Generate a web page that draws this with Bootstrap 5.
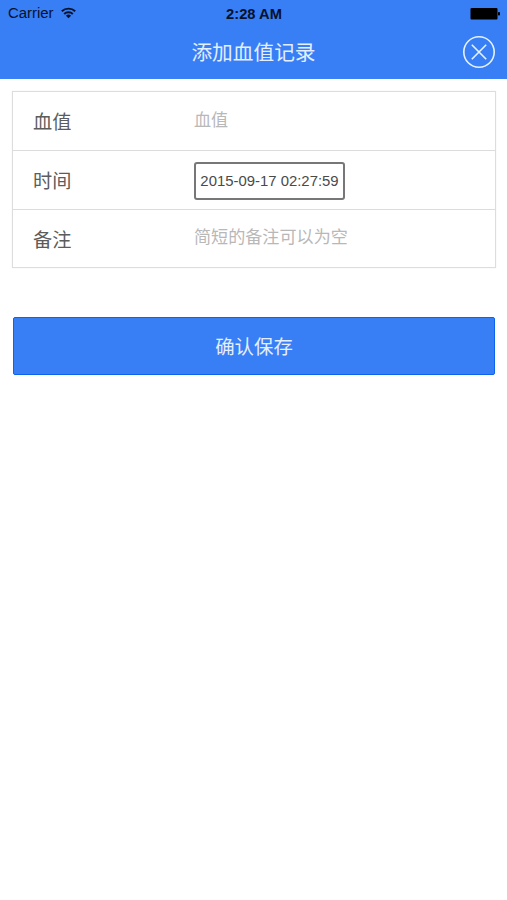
<!DOCTYPE html>
<html lang="zh-CN">
<head>
<meta charset="utf-8">
<meta name="viewport" content="width=device-width, initial-scale=1">
<title>添加血值记录</title>
<link href="https://cdn.jsdelivr.net/npm/bootstrap@5.3.0/dist/css/bootstrap.min.css" rel="stylesheet">
<style>
  body { font-family: "Liberation Sans", "Noto Sans CJK SC", sans-serif; background: #fff; color: #555; }
  .cjk { font-family: "Noto Sans CJK SC", sans-serif; font-weight: 400; }
  .app-header { background: #387ef5; height: 79px; }
  .status-bar { height: 27px; padding: 0 7px 0 8px; font-size: 14.9px; line-height: 27px; color: #06122c; }
  .status-side { flex: 1 1 0; }
  .clock { font-weight: 700; font-size: 14.7px; padding-top: 1px; }
  .wifi { margin: -1px 0 0 7px; }
  .title-bar { height: 52px; padding: 0 12px; }
  .page-title { font-size: 20.7px; line-height: 50px; padding-bottom: 5px; color: #e3eefe; }
  .close-btn { width: 32px; height: 32px; margin-top: -3px; }
  .page-body { padding: 12px 11px 0 12px; }
  .form-list { border: 1px solid #ddd; box-shadow: 0 0 1px #e4e4e4; }
  .form-item { height: 59px; padding-left: 20px; border-bottom: 1px solid #dcdcdc; }
  .form-item:last-child { height: 57px; border-bottom: 0; }
  .item-label { width: 161px; font-size: 19.2px; color: #5c5c5c; padding-top: 1px; }
  .item-input { font-size: 17.1px; color: #444; height: 34px; margin-top: -5px; }
  .form-item:last-child .item-input { margin-top: -7px; }
  .item-input::placeholder { color: #b8b8b8; opacity: 1; }
  .time-box { width: 151px; height: 38px; margin-top: 1px; border: 2px solid #777; border-radius: 3px; font-size: 14.9px; color: #4a4a4a; padding-top: 1px; }
  .save-btn { --bs-btn-bg: #387ef5; --bs-btn-color: #e3eefe; --bs-btn-border-color: #0c63ee; --bs-btn-border-radius: 2px; height: 58px; margin: 49px 1px 0; font-size: 19.4px; }
</style>
</head>
<body>
<header class="app-header">
  <div class="status-bar d-flex align-items-center">
    <div class="status-side d-flex align-items-center">
      <span>Carrier</span>
      <svg class="wifi" width="15" height="12" viewBox="0 0 15 12" fill="none" stroke="#06122c" stroke-width="1.9" aria-hidden="true">
        <path d="M.8 4.3a9.6 9.6 0 0 1 13.4 0M3.2 7a6.1 6.1 0 0 1 8.6 0"/>
        <path d="M7.5 11.3 4.9 8.7a3.7 3.7 0 0 1 5.2 0z" fill="#06122c" stroke="none"/>
      </svg>
    </div>
    <span class="clock">2:28 AM</span>
    <div class="status-side d-flex justify-content-end">
      <svg width="30" height="12" viewBox="0 0 30 12" aria-hidden="true">
        <rect x="0.5" y="0" width="27" height="11.5" rx="1" fill="#000"/>
        <rect x="28" y="4" width="2" height="3.5" rx=".8" fill="#000"/>
      </svg>
    </div>
  </div>
  <div class="title-bar d-flex align-items-center">
    <div class="close-btn invisible"></div>
    <h1 class="page-title cjk flex-fill text-center m-0">添加血值记录</h1>
    <button type="button" class="close-btn bg-transparent border-0 p-0 d-flex" aria-label="关闭">
      <svg width="32" height="32" viewBox="0 0 32 32" fill="none" stroke="#e6f2ff" stroke-width="1.6">
        <circle cx="16" cy="16" r="15.2"/>
        <path d="M8.8 8.8 23.2 23.2M23.2 8.8 8.8 23.2"/>
      </svg>
    </button>
  </div>
</header>
<main class="page-body">
  <form>
    <div class="form-list">
      <label class="form-item d-flex align-items-center">
        <span class="item-label cjk flex-shrink-0">血值</span>
        <input class="item-input cjk form-control-plaintext p-0" type="text" placeholder="血值">
      </label>
      <div class="form-item d-flex align-items-center">
        <span class="item-label cjk flex-shrink-0">时间</span>
        <span class="time-box d-flex align-items-center justify-content-center text-nowrap">2015-09-17 02:27:59</span>
      </div>
      <label class="form-item d-flex align-items-center">
        <span class="item-label cjk flex-shrink-0">备注</span>
        <input class="item-input cjk form-control-plaintext p-0" type="text" placeholder="简短的备注可以为空">
      </label>
    </div>
    <div class="d-grid">
      <button type="button" class="save-btn btn cjk">确认保存</button>
    </div>
  </form>
</main>
<script src="https://cdn.jsdelivr.net/npm/bootstrap@5.3.0/dist/js/bootstrap.bundle.min.js"></script>
</body>
</html>
